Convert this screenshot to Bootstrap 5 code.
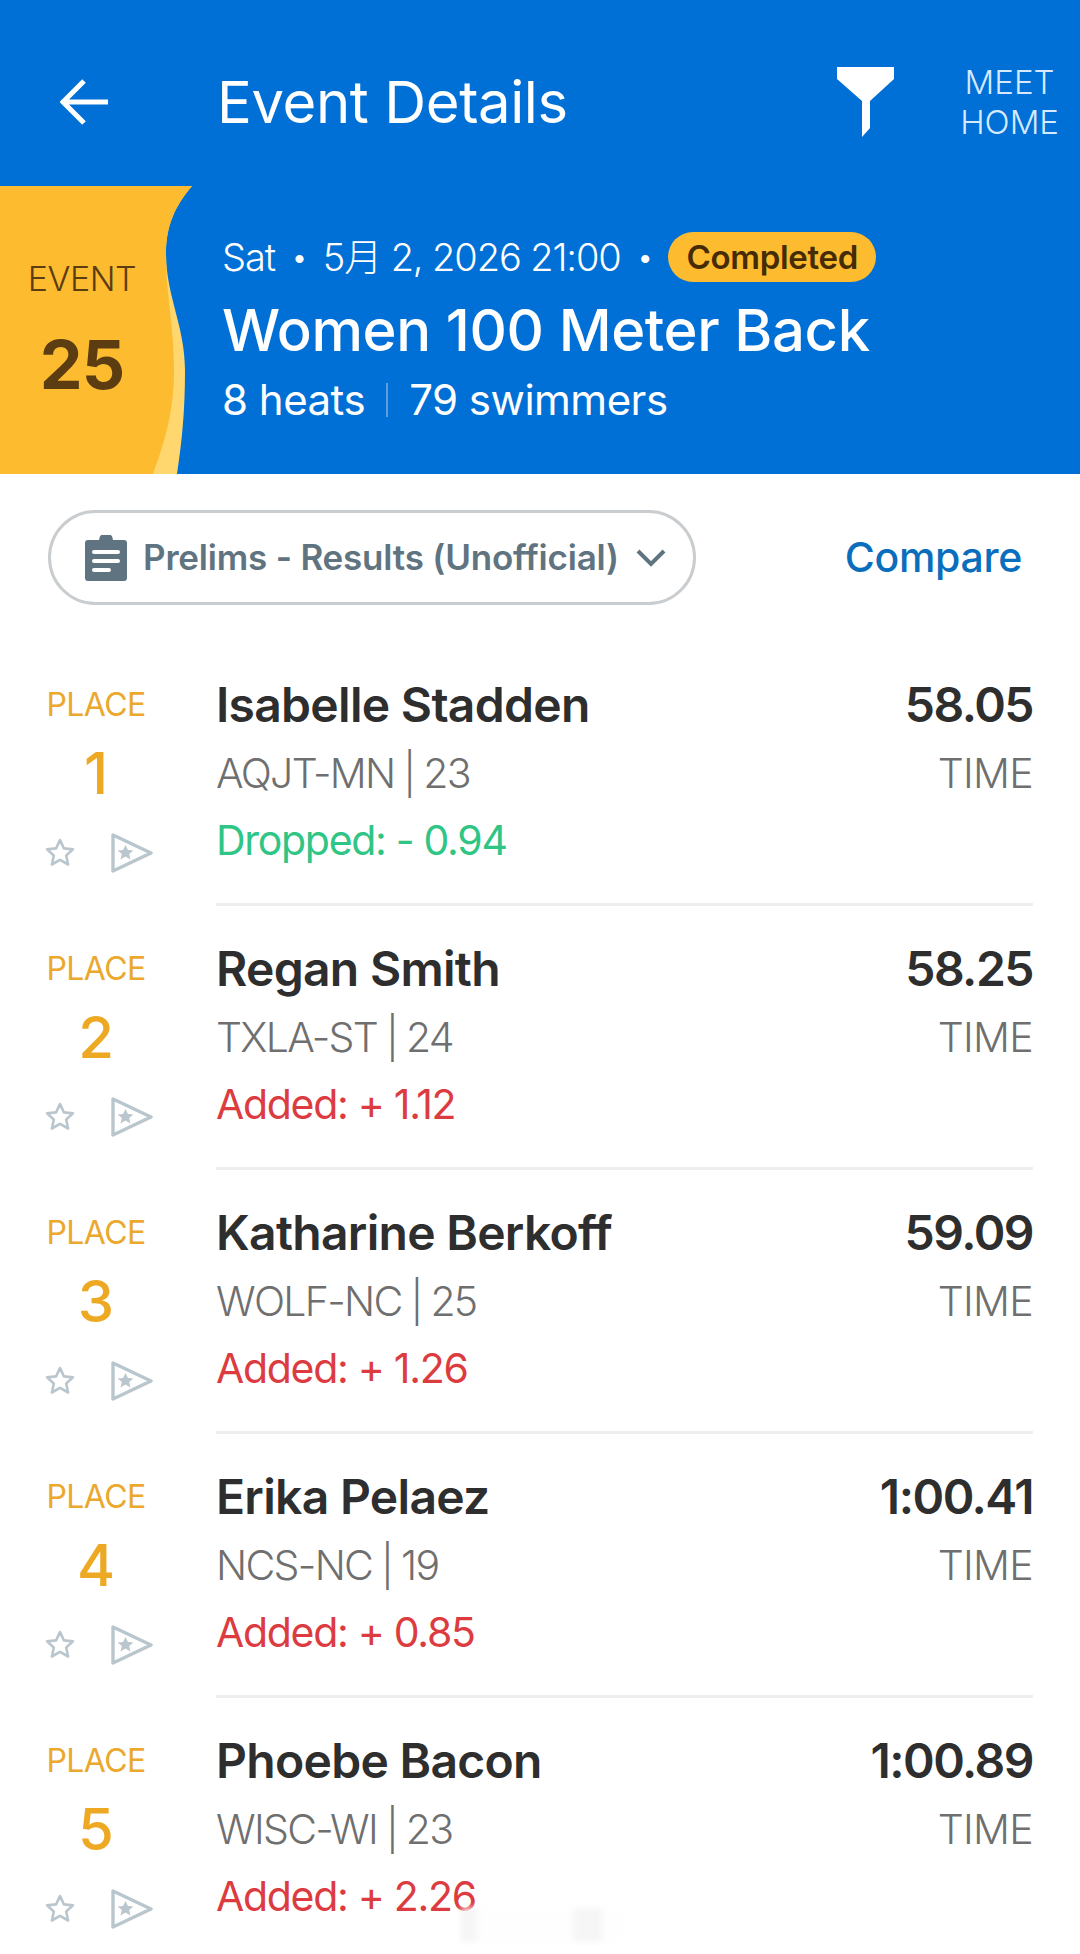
<!DOCTYPE html>
<html lang="en">
<head>
  <meta charset="UTF-8">
  <meta name="viewport" content="width=device-width, initial-scale=1.0">
  <title>Event Details</title>
  <link href="https://cdn.jsdelivr.net/npm/bootstrap@5.3.0/dist/css/bootstrap.min.css" rel="stylesheet">
  <style>
    body {
      font-family: Inter, "Noto Sans CJK JP", sans-serif;
      background-color: #fff;
      height: 1954px;
      overflow: hidden;
    }
    .top-bar {
      height: 186px;
      background-color: #006fd6;
      color: #fff;
      padding: 18px 21px 0 60px;
    }
    .top-title {
      font-size: 58px;
      font-weight: 400;
      margin-left: 109px;
      letter-spacing: -.4px;
      line-height: 1;
    }
    .meet-home {
      font-size: 33px;
      line-height: 40px;
      font-weight: 300;
      text-align: center;
      color: #d6eaff;
      margin-left: 65px;
    }
    .hero {
      height: 288px;
      background-color: #006fd6;
      color: #fff;
    }
    .ribbon-shape {
      position: absolute;
      left: 0;
      top: 0;
    }
    .ribbon-text {
      position: relative;
      width: 164px;
      color: #5c3d12;
    }
    .ribbon-label {
      font-size: 34px;
      font-weight: 300;
      line-height: 40px;
      letter-spacing: -.5px;
    }
    .ribbon-num {
      font-size: 68px;
      font-weight: 700;
      line-height: 76px;
      margin-top: 27px;
      letter-spacing: -1px;
    }
    .hero-info {
      margin-left: 58px;
      padding-bottom: 4px;
      position: relative;
    }
    .hero-date {
      font-size: 38px;
      font-weight: 300;
      line-height: 52px;
      letter-spacing: -1.1px;
    }
    .hero-dot {
      font-size: 30px;
      margin: 0 16px;
    }
    .status-pill {
      background-color: #fdbb2f;
      color: #452c05;
      font-size: 33px;
      font-weight: 600;
      line-height: 50px;
      padding: 0 18px;
      letter-spacing: -.3px;
    }
    .hero-title {
      font-size: 58px;
      font-weight: 500;
      line-height: 72px;
      margin-top: 11px;
      letter-spacing: -.4px;
    }
    .hero-sub {
      font-size: 42px;
      font-weight: 400;
      line-height: 50px;
      margin-top: 9px;
      letter-spacing: -.5px;
    }
    .hero-sep {
      width: 2px;
      height: 34px;
      background-color: #5b9fe3;
      margin: 0 21px;
    }
    .filter-row {
      padding: 36px 48px 0;
    }
    .phase-pill {
      width: 648px;
      height: 95px;
      border: 3px solid #c9cdcf;
      border-radius: 48px;
      padding-left: 34px;
      color: #5f7480;
      font-size: 35px;
      font-weight: 600;
      letter-spacing: -.2px;
    }
    .compare-link {
      color: #0a6ebd;
      font-size: 41px;
      font-weight: 500;
      text-decoration: none;
      margin-right: 10px;
      letter-spacing: -.3px;
    }
    .results {
      margin-top: 34px;
    }
    .result-row {
      height: 264px;
      padding-top: 32px;
    }
    .place-col {
      width: 216px;
      padding-right: 24px;
      flex-shrink: 0;
    }
    .place-label {
      color: #eaa92d;
      font-size: 32px;
      font-weight: 400;
      line-height: 68px;
      letter-spacing: -.6px;
      text-align: center;
    }
    .place-num {
      color: #eea924;
      font-size: 58px;
      font-weight: 500;
      line-height: 68px;
      text-align: center;
    }
    .place-icons {
      padding: 25px 0 0 45px;
    }
    .pennant-ico {
      margin-left: 36px;
    }
    .body-col {
      margin-right: 47px;
      height: 235px;
      border-bottom: 3px solid #eceeef;
    }
    .swim-name, .swim-time {
      color: #2e2e2e;
      font-size: 48px;
      font-weight: 600;
      line-height: 68px;
      letter-spacing: -.7px;
    }
    .swim-time {
      letter-spacing: -1.5px;
    }
    .swim-team, .swim-time-label {
      color: #6f6f6f;
      font-size: 41px;
      font-weight: 300;
      line-height: 68px;
      letter-spacing: -1.7px;
      word-spacing: -1px;
    }
    .swim-time-label {
      letter-spacing: -.7px;
    }
    .swim-delta {
      font-size: 41px;
      font-weight: 400;
      line-height: 68px;
      letter-spacing: -1.3px;
      margin-top: -1px;
    }
    .delta-drop { color: #2fc585; }
    .delta-add { color: #dc3c3f; }
    .smudge {
      position: absolute;
      left: 461px;
      top: 1908px;
      width: 160px;
      height: 34px;
      background: linear-gradient(90deg, #f6f6f6 0 10%, #fefefe 10% 70%, #f6f6f6 70% 88%, #fefefe 88%);
      filter: blur(3px);
    }
  </style>
</head>
<body>
  <svg width="0" height="0" class="d-block">
    <symbol id="ico-star" viewBox="0 0 30 30">
      <path d="M15 2l3.9 8.4 9.1 1-6.8 6.1 1.9 9-8.1-4.6-8.1 4.6 1.9-9L2 11.4l9.1-1z" fill="none" stroke="#b9c6cd" stroke-width="2.6" stroke-linejoin="round"/>
    </symbol>
    <symbol id="ico-pennant" viewBox="0 0 42 42">
      <path d="M2 3l38 18L2 39z" fill="none" stroke="#b9c6cd" stroke-width="3.4" stroke-linejoin="round"/>
      <path d="M13 13l2.4 5 5.4.5-4.1 3.6 1.3 5.3-5-2.9-5 2.9 1.3-5.3-4.1-3.6 5.4-.5z" transform="translate(1.5 0)" fill="#b9c6cd"/>
    </symbol>
  </svg>

  <!-- HEADER -->
  <div class="top-bar d-flex align-items-center">
    <svg width="48" height="46" viewBox="0 0 48 46"><path d="M24 2L3 23l21 21M3 23h45" fill="none" stroke="#fff" stroke-width="5"/></svg>
    <div class="top-title flex-grow-1">Event Details</div>
    <svg width="58" height="70" viewBox="0 0 58 70"><path d="M0 0h57v12L33 34v27l-8 9V34L0 12z" fill="#fff"/></svg>
    <div class="meet-home">MEET<br>HOME</div>
  </div>

  <!-- EVENT -->
  <div class="hero position-relative d-flex align-items-center">
    <svg class="ribbon-shape" width="192" height="288" viewBox="0 0 192 288">
      <path d="M0 0H192C175 20 166 40 166 67C166 110 185 140 185 184C185 225 182 255 177 288H0Z" fill="#ffd76e"/>
      <path d="M0 0H192C175 20 166 40 166 67C166 110 174 140 174 184C174 225 165 255 153 288H0Z" fill="#fdbb2f"/>
    </svg>
    <div class="ribbon-text text-center">
      <div class="ribbon-label">EVENT</div>
      <div class="ribbon-num">25</div>
    </div>
    <div class="hero-info">
      <div class="hero-date d-flex align-items-center">
        <span>Sat</span><span class="hero-dot">•</span><span>5月 2, 2026 21:00</span><span class="hero-dot">•</span><span class="status-pill rounded-pill">Completed</span>
      </div>
      <div class="hero-title">Women 100 Meter Back</div>
      <div class="hero-sub d-flex align-items-center"><span>8 heats</span><span class="hero-sep"></span><span>79 swimmers</span></div>
    </div>
  </div>

  <!-- PHASE FILTER -->
  <div class="filter-row d-flex align-items-center justify-content-between">
    <div class="phase-pill d-flex align-items-center">
      <svg width="42" height="46" viewBox="0 0 42 46" class="me-3">
        <path d="M3 5h11a7 7 0 0 1 14 0h11a3 3 0 0 1 3 3v35a3 3 0 0 1-3 3H3a3 3 0 0 1-3-3V8a3 3 0 0 1 3-3z" fill="#5f7480"/>
        <path d="M9 17h24M9 26h24M9 35h15" stroke="#fff" stroke-width="4" stroke-linecap="round"/>
      </svg>
      <span>Prelims - Results (Unofficial)</span>
      <svg width="32" height="20" viewBox="0 0 32 20" class="ms-3"><path d="M3 3l13 13L29 3" fill="none" stroke="#5f7480" stroke-width="4"/></svg>
    </div>
    <a href="#" class="compare-link">Compare</a>
  </div>

  <!-- RESULTS -->
  <div class="results">
    <div class="result-row d-flex">
      <div class="place-col">
        <div class="place-label">PLACE</div>
        <div class="place-num">1</div>
        <div class="place-icons d-flex align-items-center"><svg width="30" height="30"><use href="#ico-star"/></svg><svg width="42" height="42" class="pennant-ico"><use href="#ico-pennant"/></svg></div>
      </div>
      <div class="body-col flex-grow-1 d-flex justify-content-between">
        <div>
          <div class="swim-name">Isabelle Stadden</div>
          <div class="swim-team">AQJT-MN | 23</div>
          <div class="swim-delta delta-drop">Dropped: - 0.94</div>
        </div>
        <div class="text-end">
          <div class="swim-time">58.05</div>
          <div class="swim-time-label">TIME</div>
        </div>
      </div>
    </div>
    <div class="result-row d-flex">
      <div class="place-col">
        <div class="place-label">PLACE</div>
        <div class="place-num">2</div>
        <div class="place-icons d-flex align-items-center"><svg width="30" height="30"><use href="#ico-star"/></svg><svg width="42" height="42" class="pennant-ico"><use href="#ico-pennant"/></svg></div>
      </div>
      <div class="body-col flex-grow-1 d-flex justify-content-between">
        <div>
          <div class="swim-name">Regan Smith</div>
          <div class="swim-team">TXLA-ST | 24</div>
          <div class="swim-delta delta-add">Added: + 1.12</div>
        </div>
        <div class="text-end">
          <div class="swim-time">58.25</div>
          <div class="swim-time-label">TIME</div>
        </div>
      </div>
    </div>
    <div class="result-row d-flex">
      <div class="place-col">
        <div class="place-label">PLACE</div>
        <div class="place-num">3</div>
        <div class="place-icons d-flex align-items-center"><svg width="30" height="30"><use href="#ico-star"/></svg><svg width="42" height="42" class="pennant-ico"><use href="#ico-pennant"/></svg></div>
      </div>
      <div class="body-col flex-grow-1 d-flex justify-content-between">
        <div>
          <div class="swim-name">Katharine Berkoff</div>
          <div class="swim-team">WOLF-NC | 25</div>
          <div class="swim-delta delta-add">Added: + 1.26</div>
        </div>
        <div class="text-end">
          <div class="swim-time">59.09</div>
          <div class="swim-time-label">TIME</div>
        </div>
      </div>
    </div>
    <div class="result-row d-flex">
      <div class="place-col">
        <div class="place-label">PLACE</div>
        <div class="place-num">4</div>
        <div class="place-icons d-flex align-items-center"><svg width="30" height="30"><use href="#ico-star"/></svg><svg width="42" height="42" class="pennant-ico"><use href="#ico-pennant"/></svg></div>
      </div>
      <div class="body-col flex-grow-1 d-flex justify-content-between">
        <div>
          <div class="swim-name">Erika Pelaez</div>
          <div class="swim-team">NCS-NC | 19</div>
          <div class="swim-delta delta-add">Added: + 0.85</div>
        </div>
        <div class="text-end">
          <div class="swim-time">1:00.41</div>
          <div class="swim-time-label">TIME</div>
        </div>
      </div>
    </div>
    <div class="result-row d-flex">
      <div class="place-col">
        <div class="place-label">PLACE</div>
        <div class="place-num">5</div>
        <div class="place-icons d-flex align-items-center"><svg width="30" height="30"><use href="#ico-star"/></svg><svg width="42" height="42" class="pennant-ico"><use href="#ico-pennant"/></svg></div>
      </div>
      <div class="body-col flex-grow-1 d-flex justify-content-between border-0">
        <div>
          <div class="swim-name">Phoebe Bacon</div>
          <div class="swim-team">WISC-WI | 23</div>
          <div class="swim-delta delta-add">Added: + 2.26</div>
        </div>
        <div class="text-end">
          <div class="swim-time">1:00.89</div>
          <div class="swim-time-label">TIME</div>
        </div>
      </div>
    </div>
  </div>
  <div class="smudge"></div>

  <script src="https://cdn.jsdelivr.net/npm/bootstrap@5.3.0/dist/js/bootstrap.bundle.min.js"></script>
</body>
</html>
